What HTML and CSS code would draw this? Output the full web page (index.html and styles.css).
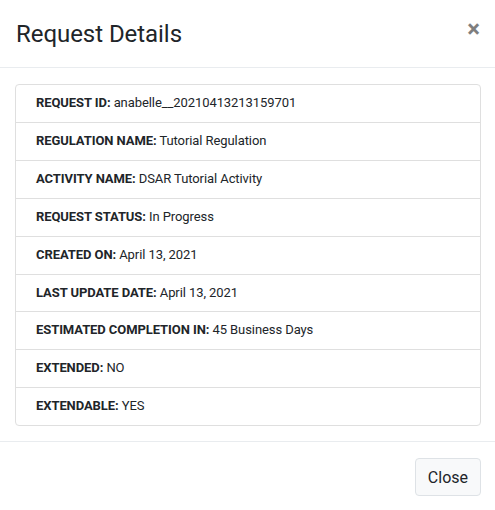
FILE: index.html
```html
<!DOCTYPE html>
<html lang="en">
<head>
<meta charset="utf-8">
<title>Request Details</title>
<link rel="stylesheet" href="styles.css">
</head>
<body>
<div class="modal">
  <div class="modal-header">
    <h5 class="modal-title">Request Details</h5>
    <button class="close" type="button" aria-label="Close">&times;</button>
  </div>
  <div class="modal-body">
    <ul class="list-group">
      <li class="item"><b>REQUEST ID:</b> anabelle__20210413213159701</li>
      <li class="item"><b>REGULATION NAME:</b> Tutorial Regulation</li>
      <li class="item"><b>ACTIVITY NAME:</b> DSAR Tutorial Activity</li>
      <li class="item"><b>REQUEST STATUS:</b> In Progress</li>
      <li class="item"><b>CREATED ON:</b> April 13, 2021</li>
      <li class="item"><b>LAST UPDATE DATE:</b> April 13, 2021</li>
      <li class="item"><b>ESTIMATED COMPLETION IN:</b> 45 Business Days</li>
      <li class="item"><b>EXTENDED:</b> NO</li>
      <li class="item"><b>EXTENDABLE:</b> YES</li>
    </ul>
  </div>
  <div class="modal-footer">
    <button class="btn" type="button">Close</button>
  </div>
</div>
</body>
</html>
```

FILE: styles.css
```css
* { box-sizing: border-box; }
html, body {
  margin: 0;
  padding: 0;
  background: #fff;
}
body {
  font-family: Roboto, "Liberation Sans", Arial, sans-serif;
  color: #212529;
}
.modal {
  width: 495px;
  background: #fff;
}
.modal-header {
  display: flex;
  align-items: flex-start;
  justify-content: space-between;
  padding: 16px 15px 15px 16px;
  border-bottom: 1px solid #e9ecef;
}
.modal-title {
  margin: 0;
  font-size: 24px;
  font-weight: 400;
  line-height: 36px;
  letter-spacing: -0.05px;
}
.close {
  background: none;
  border: 0;
  padding: 0;
  margin: 1px 0 0 0;
  font-family: Roboto, "Liberation Sans", Arial, sans-serif;
  font-size: 24px;
  font-weight: 700;
  line-height: 24px;
  color: #000;
  opacity: 0.5;
  cursor: pointer;
}
.modal-body {
  padding: 16px 14px 15px 15px;
}
.list-group {
  list-style: none;
  margin: 0;
  padding: 0;
  border: 1px solid #dfdfdf;
  border-radius: 4px;
}
.item {
  padding: 8px 20px;
  font-size: 13px;
  line-height: 20.9px;
  letter-spacing: -0.08px;
  border-top: 1px solid #dfdfdf;
}
.item:first-child { border-top: 0; }
.item b { font-weight: 700; }
.modal-footer {
  display: flex;
  justify-content: flex-end;
  padding: 16px 14px 14px 15px;
  border-top: 1px solid #e9ecef;
}
.btn {
  font-family: Roboto, "Liberation Sans", Arial, sans-serif;
  font-size: 16px;
  line-height: 24px;
  padding: 7px 12px 5px;
  color: #212529;
  background: #f8f9fa;
  border: 1px solid #dee2e6;
  border-radius: 4px;
  cursor: pointer;
}
```
